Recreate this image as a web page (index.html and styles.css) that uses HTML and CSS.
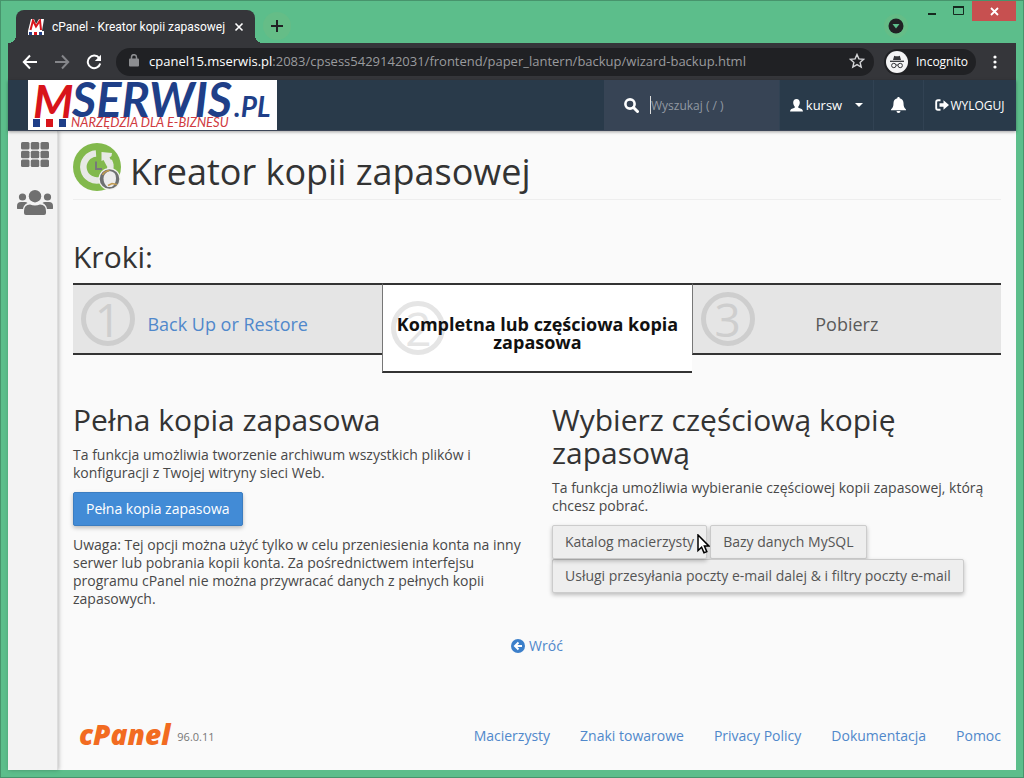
FILE: index.html
```html
<!DOCTYPE html>
<html lang="pl">
<head>
<meta charset="utf-8">
<meta name="viewport" content="width=device-width, initial-scale=1">
<title>cPanel - Kreator kopii zapasowej</title>
<link rel="stylesheet" href="styles.css">
</head>
<body>
<div class="window">
  <div class="titlebar">
    <div class="tab">
      <svg class="favicon" viewBox="0 0 16 16" aria-hidden="true"><path d="M0 12L3 0h3l2 5 3-5h5l-2 12z" fill="#fff"/><path d="M2.500 11L5 1.500l3 6 4-6L13 11" fill="none" stroke="#d9141c" stroke-width="2"/><path d="M0 12h16v4H0z" fill="#fff"/><path d="M1 13h3v3H1zM11 13h3v3h-3z" fill="#24418a"/><path d="M6 13h3v3H6z" fill="#d9141c"/></svg>
      <span class="tab-title">cPanel - Kreator kopii zapasowej</span>
      <button class="icon-btn" aria-label="Zamknij kartę"><svg width="10" height="10" viewBox="0 0 10 10"><path d="M1.500 1.500l7 7M8.500 1.500l-7 7" stroke="#fff" stroke-width="1.600"/></svg></button>
    </div>
    <button class="icon-btn new-tab" aria-label="Nowa karta"><svg width="14" height="14" viewBox="0 0 14 14"><path d="M7 1v12M1 7h12" stroke="#202124" stroke-width="2"/></svg></button>
    <button class="icon-btn tab-search" aria-label="Szukaj kart"><svg width="16" height="16" viewBox="0 0 16 16"><circle cx="8" cy="8" r="7.500" fill="#202124"/><path d="M4.500 6h7L8 10.500z" fill="#5cbe8b"/></svg></button>
    <div class="win-controls">
      <button class="win-btn" aria-label="Minimalizuj"><svg width="10" height="10" viewBox="0 0 10 10"><path d="M1 7h8v2H1z" fill="#16291f"/></svg></button>
      <button class="win-btn" aria-label="Maksymalizuj"><svg width="11" height="10" viewBox="0 0 11 10"><path d="M.5 1h10v7.500H.5z" fill="none" stroke="#16291f"/><path d="M0 1h11" stroke="#16291f" stroke-width="2"/></svg></button>
      <button class="win-btn win-close" aria-label="Zamknij"><svg width="9" height="9" viewBox="0 0 9 9"><path d="M1 1l7 7M8 1L1 8" stroke="#fff" stroke-width="1.800"/></svg></button>
    </div>
  </div>

  <div class="toolbar">
    <button class="icon-btn nav-btn" aria-label="Wstecz"><svg width="16" height="16" viewBox="0 0 16 16"><path d="M15 8H2M8 1.500L1.800 8 8 14.500" fill="none" stroke="#fff" stroke-width="2"/></svg></button>
    <button class="icon-btn nav-btn" aria-label="Dalej"><svg width="16" height="16" viewBox="0 0 16 16"><path d="M1 8h13M8 1.500L14.200 8 8 14.500" fill="none" stroke="#85868a" stroke-width="2"/></svg></button>
    <button class="icon-btn nav-btn" aria-label="Odśwież"><svg width="16" height="16" viewBox="0 0 16 16"><path d="M13.200 4.200A6.300 6.300 0 1 0 14.200 9.500" fill="none" stroke="#fff" stroke-width="2"/><path d="M15 .8V7H8.800z" fill="#fff"/></svg></button>
    <div class="address">
      <svg width="10" height="13" viewBox="0 0 10 13" aria-hidden="true"><rect y="4.500" width="10" height="8" rx="1" fill="#8d8e91"/><path d="M2.500 5V3.200a2.500 2.500 0 0 1 5 0V5" fill="none" stroke="#8d8e91" stroke-width="1.500"/></svg>
      <span class="url"><span class="url-host">cpanel15.mserwis.pl</span>:2083/cpsess5429142031/frontend/paper_lantern/backup/wizard-backup.html</span>
      <button class="icon-btn" aria-label="Dodaj zakładkę"><svg width="16" height="16" viewBox="0 0 16 16"><path d="M8 1.500l1.900 4.400 4.800.4-3.600 3.100 1.100 4.700L8 11.600l-4.200 2.500 1.100-4.700L1.300 6.300l4.800-.4z" fill="none" stroke="#d4d5d7" stroke-width="1.400"/></svg></button>
    </div>
    <div class="incognito">
      <svg width="22" height="22" viewBox="0 0 22 22" aria-hidden="true"><circle cx="11" cy="11" r="11" fill="#f4f4f5"/><path d="M7 9l1.200-4.300q2.800 1 5.600 0L15 9z" fill="#35363a"/><path d="M4 10.300h14" stroke="#35363a" stroke-width="1.300"/><circle cx="7.800" cy="14.500" r="2.200" fill="none" stroke="#35363a"/><circle cx="14.200" cy="14.500" r="2.200" fill="none" stroke="#35363a"/><path d="M10 14.200q1-.6 2 0" fill="none" stroke="#35363a"/></svg>
      <span>Incognito</span>
    </div>
    <button class="icon-btn menu-btn" aria-label="Menu"><svg width="4" height="14" viewBox="0 0 4 14"><g fill="#fff"><circle cx="2" cy="2" r="1.600"/><circle cx="2" cy="7" r="1.600"/><circle cx="2" cy="12" r="1.600"/></g></svg></button>
  </div>

  <header class="header">
    <a class="brand" href="#" aria-label="MSERWIS.PL">
      <svg width="249" height="50" viewBox="0 0 249 50">
        <g class="logo-text">
          <text x="5" y="38" class="logo-m">M</text>
          <text x="44" y="37" class="logo-name">SERWIS</text>
          <text x="206" y="37" class="logo-tld">.PL</text>
          <text x="43" y="47" class="logo-tag">NARZĘDZIA DLA E-BIZNESU</text>
        </g>
        <path d="M5 39h7v8H5zM31 39h7v8h-7z" fill="#1f3f88"/><path d="M18 39h7v8h-7z" fill="#d8141b"/>
      </svg>
    </a>
    <label class="search">
      <svg width="15" height="15" viewBox="0 0 15 15" aria-hidden="true"><circle cx="6" cy="6" r="4.600" fill="none" stroke="#fff" stroke-width="2.600"/><path d="M9.500 9.500l4 4" stroke="#fff" stroke-width="3" stroke-linecap="round"/></svg>
      <input type="text" class="search-input" placeholder="Wyszukaj ( / )" aria-label="Wyszukaj">
    </label>
    <button class="head-item user">
      <svg width="13" height="13" viewBox="0 0 13 13" aria-hidden="true"><path d="M6.500 0c2.200 0 3.300 1.500 3.300 3.600 0 1.600-.7 3-1.500 3.900v1.200l3.400 1.300q1.100.5 1.300 2.500H0Q.2 10.500 1.300 10l3.400-1.300V7.500C3.900 6.600 3.200 5.200 3.200 3.600 3.200 1.500 4.300 0 6.500 0z" fill="#fff"/></svg>
      <span class="user-name">kursw</span>
      <svg width="8" height="4" viewBox="0 0 8 4" aria-hidden="true"><path d="M0 0h8L4 4z" fill="#fff"/></svg>
    </button>
    <button class="head-item bell" aria-label="Powiadomienia"><svg width="15" height="16" viewBox="0 0 15 16"><path d="M7.500 0c.8 0 1.200.5 1.200 1.200C11.300 1.700 12.500 3.700 12.500 6c0 3.500.8 5 2.500 6.500v.7H0v-.7C1.700 11 2.500 9.500 2.500 6c0-2.300 1.200-4.300 3.800-4.800C6.300.5 6.700 0 7.500 0zM5.500 14h4a2 2 0 0 1-4 0z" fill="#fff"/></svg></button>
    <a class="head-item logout" href="#">
      <svg width="14" height="12" viewBox="0 0 14 12" aria-hidden="true"><path d="M5.500 1.200H3Q1.200 1.200 1.200 3v6Q1.200 10.800 3 10.800h2.500" fill="none" stroke="#fff" stroke-width="1.900"/><path d="M4.500 4.300h4V1.200L14 6 8.500 10.800V7.700h-4z" fill="#fff"/></svg>
      <span>WYLOGUJ</span>
    </a>
  </header>

  <div class="content">
    <nav class="sidebar">
      <a href="#" aria-label="Strona główna"><svg width="28" height="25" viewBox="0 0 28 25"><g fill="#707070"><rect width="8.500" height="7.500" rx="1.500"/><rect x="9.750" width="8.500" height="7.500" rx="1.500"/><rect x="19.500" width="8.500" height="7.500" rx="1.500"/><rect y="8.750" width="8.500" height="7.500" rx="1.500"/><rect x="9.750" y="8.750" width="8.500" height="7.500" rx="1.500"/><rect x="19.500" y="8.750" width="8.500" height="7.500" rx="1.500"/><rect y="17.500" width="8.500" height="7.500" rx="1.500"/><rect x="9.750" y="17.500" width="8.500" height="7.500" rx="1.500"/><rect x="19.500" y="17.500" width="8.500" height="7.500" rx="1.500"/></g></svg></a>
      <a href="#" aria-label="Użytkownicy"><svg width="36" height="25" viewBox="0 0 36 25"><g fill="#707070"><circle cx="18" cy="6.200" r="6.200"/><circle cx="5.500" cy="7" r="3.600"/><circle cx="30.500" cy="7" r="3.600"/><path d="M7 23v-2q0-6.500 6-6.500 5 2 10 0 6 0 6 6.500v2q0 2-2 2H9q-2 0-2-2zM0 18.500V16q0-4 4-4h4q1.500 0 2.500 1-4 1.800-4.500 6H1.500Q0 19 0 18.500zM36 18.500V16q0-4-4-4h-4q-1.500 0-2.500 1 4 1.800 4.500 6h4.500q1.500 0 1.500-.5z"/></g></svg></a>
    </nav>
    <main class="main">
      <div class="page-head">
        <svg width="48" height="48" viewBox="0 0 48 48" aria-hidden="true"><circle cx="24" cy="24" r="24" fill="#82b94c"/><path d="M23 10.500A13.500 13.500 0 1 0 36 18" fill="none" stroke="#e7e9e5" stroke-width="6.500"/><path d="M28.500 9L39 10l-.5 3-2 1.500 4 7-6.500 2-3.500-6.500-2 1z" fill="#e7e9e5"/><path d="M23 18.500v7.500h6" fill="none" stroke="#77787a" stroke-width="2"/><circle cx="36.500" cy="36" r="11" fill="#f2f2ee"/><circle cx="36.500" cy="36" r="9.800" fill="#6e7071"/><path d="M36.500 28q6.500.5 6.500 7t-4.500 9h-4q-4-3-4-8.500t6-7.500z" fill="#ececec"/><path d="M29.500 32q2-4 7-4.500M35 42.500l4-2 5 1" fill="none" stroke="#c29b50" stroke-width="1.600"/></svg>
        <h1 class="title">Kreator kopii zapasowej</h1>
      </div>
      <h2 class="subtitle steps-title">Kroki:</h2>
      <ol class="steps">
        <li class="step"><span class="step-num">1</span><a class="step-label" href="#">Back Up or Restore</a></li>
        <li class="step step-active"><span class="step-num">2</span><span class="step-label">Kompletna lub częściowa kopia zapasowa</span></li>
        <li class="step step-last"><span class="step-num">3</span><span class="step-label">Pobierz</span></li>
      </ol>
      <div class="columns">
        <section class="column">
          <h2 class="subtitle">Pełna kopia zapasowa</h2>
          <p class="text">Ta funkcja umożliwia tworzenie archiwum wszystkich plików i konfiguracji z Twojej witryny sieci Web.</p>
          <button class="btn btn-primary">Pełna kopia zapasowa</button>
          <p class="text note">Uwaga: Tej opcji można użyć tylko w celu przeniesienia konta na inny serwer lub pobrania kopii konta. Za pośrednictwem interfejsu programu cPanel nie można przywracać danych z pełnych kopii zapasowych.</p>
        </section>
        <section class="column">
          <h2 class="subtitle">Wybierz częściową kopię zapasową</h2>
          <p class="text">Ta funkcja umożliwia wybieranie częściowej kopii zapasowej, którą chcesz pobrać.</p>
          <div class="btn-group">
            <div class="btn-wrap">
              <button class="btn">Katalog macierzysty</button>
              <svg class="cursor" width="13" height="20" viewBox="0 0 13 20" aria-hidden="true"><path d="M1 1v15.500l3.600-3.300 2.400 5.600 2.800-1.200-2.400-5.500H12z" fill="#fff" stroke="#000" stroke-width="1.500"/></svg>
            </div>
            <button class="btn">Bazy danych MySQL</button>
            <button class="btn">Usługi przesyłania poczty e-mail dalej &amp; i filtry poczty e-mail</button>
          </div>
        </section>
      </div>
      <a class="back" href="#"><svg width="14" height="14" viewBox="0 0 14 14" aria-hidden="true"><circle cx="7" cy="7" r="7" fill="#3c7fca"/><path d="M7.500 3.500L4 7l3.500 3.500M4 7h7" fill="none" stroke="#fff" stroke-width="2"/></svg><span>Wróć</span></a>
      <footer class="footer">
        <span class="cpanel">cPanel</span>
        <span class="version">96.0.11</span>
        <nav class="links">
          <a href="#">Macierzysty</a><a href="#">Znaki towarowe</a><a href="#">Privacy Policy</a><a href="#">Dokumentacja</a><a href="#">Pomoc</a>
        </nav>
      </footer>
    </main>
  </div>
</div>
</body>
</html>
```
FILE: styles.css
```css
* { box-sizing: border-box; }
body { margin: 0; font-family: "Open Sans", "Noto Sans", sans-serif; font-size: 14px; color: #484848; }
button { font: inherit; border: 0; background: none; padding: 0; color: inherit; }
a { color: #5088cb; text-decoration: none; }
h1, h2, p, ol { margin: 0; padding: 0; }
svg { display: block; flex: none; }

.window { min-height: 100vh; display: flex; flex-direction: column; padding: 0 7px 7px; background: #5cbe8b; border: 1px solid #47946c; }

/* Browser chrome */
.titlebar { display: flex; align-items: flex-end; height: 42px; padding-left: 8px; }
.tab { position: relative; display: flex; align-items: center; gap: 8px; width: 239px; height: 33px; padding: 0 11px 0 12px; border-radius: 8px 8px 0 0; background: #35363a; color: #fff; font-family: Roboto, "Open Sans", sans-serif; font-size: 12px; }
.tab::before, .tab::after { content: ""; position: absolute; bottom: 0; width: 8px; height: 8px; }
.tab::before { right: 100%; background: radial-gradient(circle at 0 0, #5cbe8b 8px, #35363a 8px); }
.tab::after { left: 100%; background: radial-gradient(circle at 100% 0, #5cbe8b 8px, #35363a 8px); }
.favicon { width: 16px; height: 16px; }
.tab-title { flex: 1; white-space: nowrap; }
.icon-btn { display: flex; align-items: center; justify-content: center; }
.new-tab { width: 28px; height: 28px; margin: 0 auto 3px 8px; border-radius: 50%; background: #65bd87; }
.tab-search { width: 24px; height: 24px; margin: 0 8px 5px; border-radius: 50%; background: #65bd87; }
.win-controls { display: flex; align-self: flex-start; margin-left: 2px; }
.win-btn { display: flex; align-items: center; justify-content: center; width: 27px; height: 20px; }
.win-close { width: 44px; background: #c75050; }
.toolbar { display: flex; align-items: center; height: 37px; padding: 0 17px 0 6px; background: #35363a; color: #fff; }
.nav-btn { width: 32px; height: 28px; }
.address { flex: 1; min-width: 0; display: flex; align-items: center; gap: 10px; height: 28px; margin-left: 6px; padding: 0 9px 2px 13px; border-radius: 14px; background: #202124; color: #9a9b9e; font-size: 13px; }
.url { flex: 1; min-width: 0; overflow: hidden; white-space: nowrap; }
.url-host { color: #fff; }
.incognito { display: flex; align-items: center; gap: 8px; height: 26px; margin: 0 15px 0 10px; padding: 0 8px 0 2px; border-radius: 13px; background: #202124; font-size: 12px; }
.menu-btn { width: 8px; height: 24px; }

/* Page header */
.header { position: relative; display: flex; height: 51px; padding-left: 20px; background: #293a4a; border-bottom: 1px solid #3c4658; box-shadow: 0 1px 3px rgba(0, 0, 0, .35); color: #fff; }
.brand { height: 50px; margin-right: auto; background: #fff; }
.logo-text { font-family: Lato, sans-serif; font-style: italic; }
.logo-m { font-size: 46px; font-weight: 700; fill: #d8141b; }
.logo-name { font-size: 47px; font-weight: 700; fill: #1f3f88; }
.logo-tld { font-size: 28px; font-weight: 700; fill: #1f3f88; }
.logo-tag { font-size: 13px; fill: #d03a40; }
.search { display: flex; align-items: center; gap: 11px; width: 175px; padding: 0 20px; background: #374455; }
.search-input { flex: 1; min-width: 0; height: 18px; padding: 0; border: 0; border-left: 1px solid #ddd; background: none; color: #fff; font: inherit; font-size: 12px; outline: 0; }
.search-input::placeholder { color: #9299a2; opacity: 1; }
.head-item { display: flex; align-items: center; justify-content: center; gap: 3px; color: #fff; border-left: 1px solid #314253; font-size: 13px; }
.user { width: 94px; }
.user-name { margin-right: 10px; }
.bell { width: 50px; }
.logout { width: 93px; font-size: 12px; gap: 1px; }

.content { flex: 1; display: flex; background: #fafafa; }
.sidebar { display: flex; flex-direction: column; align-items: center; gap: 23px; width: 50px; padding: 11px 0 0 5px; background: #f3f3f3; border-right: 1px solid #ddd; box-shadow: 1px 0 4px rgba(0, 0, 0, .25); }
.main { flex: 1; min-width: 0; display: flex; flex-direction: column; padding: 12px 15px 22px; }
.page-head { display: flex; gap: 9px; padding-bottom: 8px; border-bottom: 1px solid #eee; }
.title { font-size: 36px; line-height: 58px; height: 48px; font-weight: 400; color: #333; }
.subtitle { font-size: 30px; line-height: 33px; font-weight: 400; color: #333; }
.steps-title { margin: 40px 0 10px; }

.steps { display: grid; grid-template-columns: repeat(3, 1fr); align-items: start; list-style: none; }
.step { position: relative; display: flex; align-items: center; justify-content: center; height: 72px; padding: 10px 12px 0; border: solid #333; border-width: 2px 0; background: #e5e5e5; color: #5a5a5a; font-size: 18px; line-height: 18px; text-align: center; }
.step-active { height: 90px; background: #fff; border-left: 1px solid #777; color: #111; font-weight: 700; }
.step-last { border-left: 1px solid #777; }
.step-label { position: relative; }
.step-num { position: absolute; left: 8px; top: 7px; width: 54px; height: 54px; border: 5px solid #cecece; border-radius: 50%; color: #cecece; font-size: 46px; line-height: 44px; font-weight: 400; }
.step-active .step-num { top: 16px; border-color: #e5e5e5; color: #e5e5e5; }

.columns { display: grid; grid-template-columns: 1fr 1fr; gap: 30px; margin-top: 30px; }
.text { margin: 10px 0; font-size: 14px; line-height: 18px; }
.btn { min-height: 34px; padding: 0 12px; border: 1px solid #ccc; border-radius: 2px; background: #eee; color: #555; font-size: 14px; line-height: 18px; box-shadow: 0 2px 4px rgba(0, 0, 0, .25); }
.btn-primary { background: #428bd6; border-color: #3b7dc1; color: #fff; }
.btn-group { display: flex; flex-wrap: wrap; column-gap: 3px; }
.btn-wrap { position: relative; }
.cursor { position: absolute; right: -3px; top: 9px; }
.back { display: flex; align-items: center; gap: 4px; align-self: center; margin-top: 18px; }

.footer { display: flex; align-items: center; margin-top: auto; }
.cpanel { margin-left: 6px; color: #f26b21; font-family: "Open Sans", sans-serif; font-size: 28px; line-height: 28px; font-style: italic; font-weight: 800; }
.version { margin-left: 7px; padding-top: 4px; color: #777; font-size: 11px; }
.links { display: flex; gap: 30px; margin-left: auto; padding-top: 2px; }
```
